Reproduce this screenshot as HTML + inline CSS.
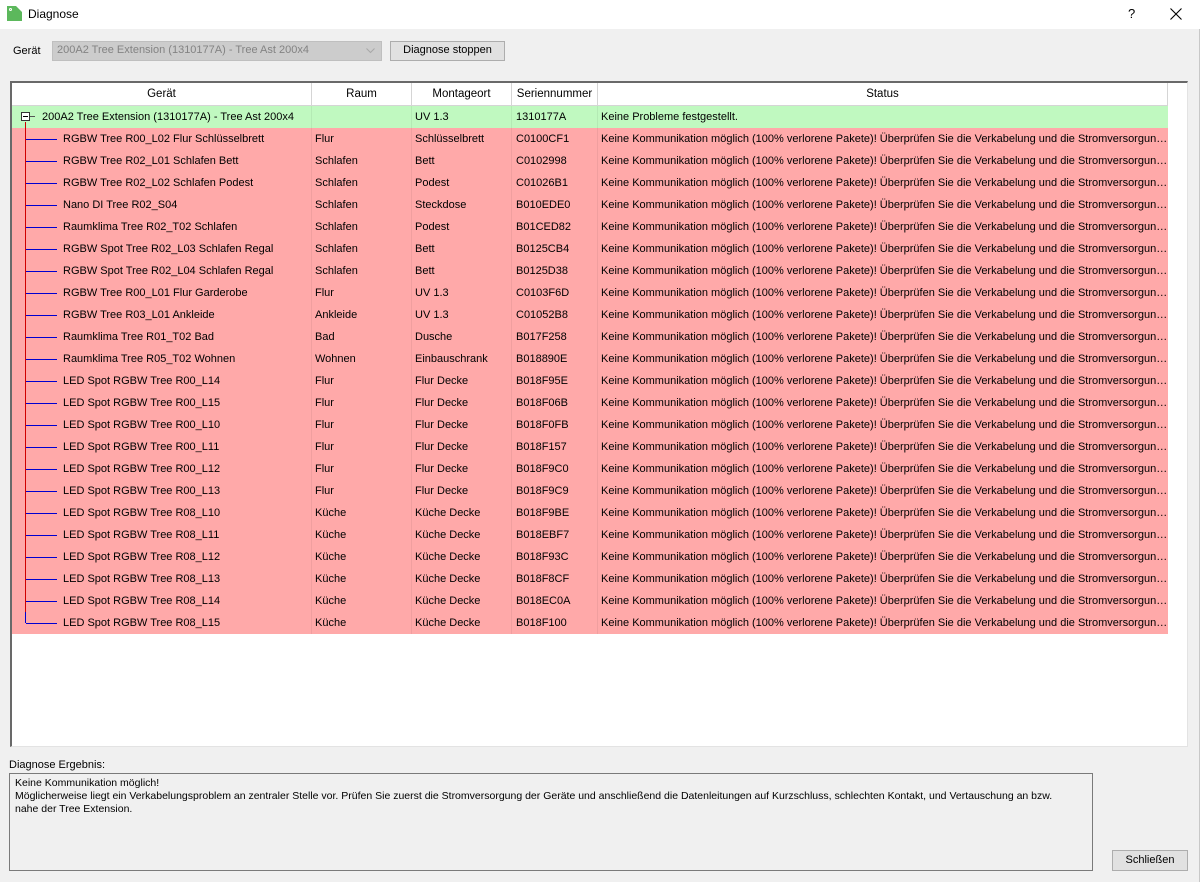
<!DOCTYPE html>
<html><head><meta charset="utf-8"><style>
*{margin:0;padding:0;box-sizing:border-box}
body{width:1200px;height:882px;background:#f0f0f0;font-family:"Liberation Sans",sans-serif;font-size:11px;color:#000;position:relative;overflow:hidden}
.a{position:absolute}
.title{left:0;top:0;width:1200px;height:29px;background:#fff}
.hdr{top:83px;height:23px;background:#fff;border-right:1px solid #d5d5d5;border-bottom:1px solid #d5d5d5;text-align:center;line-height:23px;font-size:11.5px}
.row{left:12px;width:1156px;height:22px;position:absolute}
.c{position:absolute;top:0;height:22px;line-height:23px;white-space:nowrap;overflow:hidden;text-overflow:ellipsis;border-right:1px solid rgba(0,0,0,0.06)}
.btn{background:#e1e1e1;border:1px solid #adadad;text-align:center;line-height:17px}
</style></head><body>
<div class="a title"></div>
<div class="a" style="left:7px;top:6px;width:15px;height:15px;background:#5cb85c;clip-path:polygon(0 0,60% 0,100% 40%,100% 100%,0 100%)"></div>
<div class="a" style="left:9px;top:8px;width:3px;height:3px;border:1px solid #fff;border-radius:50%"></div>
<div class="a" style="left:28px;top:7px;font-size:12px">Diagnose</div>
<div class="a" style="left:1128px;top:6px;font-size:13px">?</div>
<svg class="a" style="left:1170px;top:8px" width="12" height="12"><path d="M0.5 0.5L11.5 11.5M11.5 0.5L0.5 11.5" stroke="#000" stroke-width="1.1"/></svg>
<div class="a" style="left:1199px;top:29px;width:1px;height:853px;background:#c8c8c8"></div>
<div class="a" style="left:13px;top:45px">Gerät</div>
<div class="a" style="left:52px;top:41px;width:330px;height:20px;background:#cccccc;border:1px solid #bfbfbf;color:#838383;padding-left:4px;line-height:17px">200A2 Tree Extension (1310177A) - Tree Ast 200x4</div>
<svg class="a" style="left:366px;top:48px" width="9" height="6"><path d="M0.5 0.5L4.5 4.5L8.5 0.5" stroke="#a8a8a8" fill="none"/></svg>
<div class="a btn" style="left:390px;top:41px;width:115px;height:20px">Diagnose stoppen</div>
<div class="a" style="left:10px;top:81px;width:1178px;height:666px;background:#fff;border:1px solid #828282;border-right-color:#e3e3e3;border-bottom-color:#e3e3e3;border-top:2px solid #696969;border-left:2px solid #696969"></div>
<div class="a hdr" style="left:12px;width:300px">Gerät</div>
<div class="a hdr" style="left:312px;width:100px">Raum</div>
<div class="a hdr" style="left:412px;width:100px">Montageort</div>
<div class="a hdr" style="left:512px;width:86px">Seriennummer</div>
<div class="a hdr" style="left:598px;width:570px">Status</div>
<div id="rows"></div>
<div class="a" style="left:9px;top:759px">Diagnose Ergebnis:</div>
<div class="a" style="left:9px;top:773px;width:1084px;height:98px;border:1px solid #7a7a7a;padding:3px 5px;line-height:13px;background:#f0f0f0;white-space:nowrap;font-size:10.5px">Keine Kommunikation möglich!<br>Möglicherweise liegt ein Verkabelungsproblem an zentraler Stelle vor. Prüfen Sie zuerst die Stromversorgung der Geräte und anschließend die Datenleitungen auf Kurzschluss, schlechten Kontakt, und Vertauschung an bzw.<br>nahe der Tree Extension.</div>
<div class="a btn" style="left:1112px;top:850px;width:76px;height:21px;line-height:19px">Schließen</div>
<script>
var d=[["RGBW Tree R00_L02 Flur Schlüsselbrett","Flur","Schlüsselbrett","C0100CF1"],
["RGBW Tree R02_L01 Schlafen Bett","Schlafen","Bett","C0102998"],
["RGBW Tree R02_L02 Schlafen Podest","Schlafen","Podest","C01026B1"],
["Nano DI Tree R02_S04","Schlafen","Steckdose","B010EDE0"],
["Raumklima Tree R02_T02 Schlafen","Schlafen","Podest","B01CED82"],
["RGBW Spot Tree R02_L03 Schlafen Regal","Schlafen","Bett","B0125CB4"],
["RGBW Spot Tree R02_L04 Schlafen Regal","Schlafen","Bett","B0125D38"],
["RGBW Tree R00_L01 Flur Garderobe","Flur","UV 1.3","C0103F6D"],
["RGBW Tree R03_L01 Ankleide","Ankleide","UV 1.3","C01052B8"],
["Raumklima Tree R01_T02 Bad","Bad","Dusche","B017F258"],
["Raumklima Tree R05_T02 Wohnen","Wohnen","Einbauschrank","B018890E"],
["LED Spot RGBW Tree R00_L14","Flur","Flur Decke","B018F95E"],
["LED Spot RGBW Tree R00_L15","Flur","Flur Decke","B018F06B"],
["LED Spot RGBW Tree R00_L10","Flur","Flur Decke","B018F0FB"],
["LED Spot RGBW Tree R00_L11","Flur","Flur Decke","B018F157"],
["LED Spot RGBW Tree R00_L12","Flur","Flur Decke","B018F9C0"],
["LED Spot RGBW Tree R00_L13","Flur","Flur Decke","B018F9C9"],
["LED Spot RGBW Tree R08_L10","Küche","Küche Decke","B018F9BE"],
["LED Spot RGBW Tree R08_L11","Küche","Küche Decke","B018EBF7"],
["LED Spot RGBW Tree R08_L12","Küche","Küche Decke","B018F93C"],
["LED Spot RGBW Tree R08_L13","Küche","Küche Decke","B018F8CF"],
["LED Spot RGBW Tree R08_L14","Küche","Küche Decke","B018EC0A"],
["LED Spot RGBW Tree R08_L15","Küche","Küche Decke","B018F100"]];
var st="Keine Kommunikation möglich (100% verlorene Pakete)! Überprüfen Sie die Verkabelung und die Stromversorgung der Geräte.";
function row(y,bg,a,b,c,e,s,pad){return '<div class="row" style="top:'+y+'px;background:'+bg+'"><div class="c" style="left:0;width:300px;padding-left:'+pad+'px">'+a+'</div><div class="c" style="left:300px;width:100px;padding-left:3px">'+b+'</div><div class="c" style="left:400px;width:100px;padding-left:3px">'+c+'</div><div class="c" style="left:500px;width:86px;padding-left:4px">'+e+'</div><div class="c" style="left:586px;width:570px;padding-left:3px;border:0">'+s+'</div></div>';}
var h=row(106,'#c0f9c0','200A2 Tree Extension (1310177A) - Tree Ast 200x4','','UV 1.3','1310177A','Keine Probleme festgestellt.',30);
for(var i=0;i<d.length;i++)h+=row(128+i*22,'#ffa9a9',d[i][0],d[i][1],d[i][2],d[i][3],st,51);
h+='<div class="a" style="left:25px;top:122px;width:1px;height:490px;background:#d00000"></div>';
for(var i=0;i<d.length;i++)h+='<div class="a" style="left:26px;top:'+(139+i*22)+'px;width:31px;height:1px;background:#0000d0"></div>';
h+='<div class="a" style="left:25px;top:612px;width:1px;height:11px;background:#0000d0"></div>';
h+='<div class="a" style="left:21px;top:112px;width:9px;height:9px;border:1px solid #333;background:#fff"></div><div class="a" style="left:23px;top:116px;width:5px;height:1px;background:#000"></div><div class="a" style="left:30px;top:116px;width:5px;height:1px;background:#555"></div>';
document.getElementById('rows').innerHTML=h;
</script>
</body></html>
